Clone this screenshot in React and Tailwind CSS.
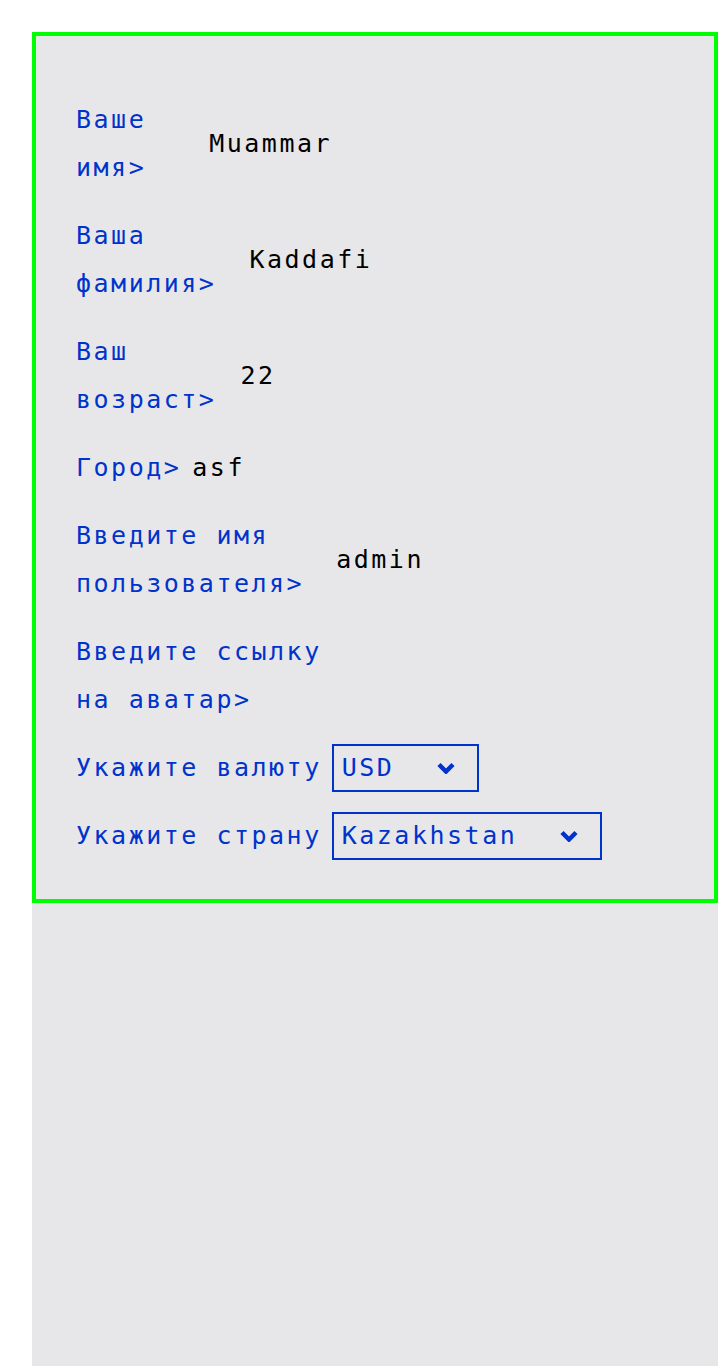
import React from "react";

const rows = [
    { label: ["Ваше", "имя>"], value: "Muammar", gap: "ml-[63px]" },
    { label: ["Ваша", "фамилия>"], value: "Kaddafi", gap: "ml-[33px]" },
    { label: ["Ваш", "возраст>"], value: "22", gap: "ml-[24px]" },
    { label: ["Город>"], value: "asf", gap: "ml-[11px]" },
    { label: ["Введите имя", "пользователя>"], value: "admin", gap: "ml-[32px]" },
    { label: ["Введите ссылку", "на аватар>"], value: "", gap: "" },
];

function Chevron() {
    return (
        <svg width="18" height="12" viewBox="0 0 18 12" className="shrink-0">
            <path d="M2 2.5 L9 9.5 L16 2.5" fill="none" stroke="#0033cc" strokeWidth="4.5" strokeLinecap="butt" strokeLinejoin="miter" />
        </svg>
    );
}

function Select({ value }) {
    return (
        <div className="ml-[10px] h-12 flex items-center border-2 border-[#0033cc] pl-2 pr-[22px] text-[#0033cc]">
            <span>{value}</span>
            <span className="ml-[43px] flex items-center">
                <Chevron />
            </span>
        </div>
    );
}

export default function App() {
    return (
        <div
            className="min-h-screen bg-white pl-8 pt-8 text-[25px] leading-[48px] tracking-[2.5px]"
            style={{ fontFamily: '"DejaVu Sans Mono", monospace' }}
        >
            <div className="bg-[#e7e7ea] min-h-[1334px]">
                <div className="border-4 border-[#00ff00] pl-10 pt-[60px] pb-[39px] flex flex-col gap-5">
                    {rows.map((r, i) => (
                        <div key={i} className="flex items-center">
                            <div className="text-[#0033cc]">
                                {r.label.map((l, j) => (
                                    <div key={j} className="whitespace-pre">{l}</div>
                                ))}
                            </div>
                            {r.value && <span className={`${r.gap} text-black`}>{r.value}</span>}
                        </div>
                    ))}
                    <div className="flex items-center">
                        <span className="text-[#0033cc] whitespace-pre">Укажите валюту</span>
                        <Select value="USD" />
                    </div>
                    <div className="flex items-center">
                        <span className="text-[#0033cc] whitespace-pre">Укажите страну</span>
                        <Select value="Kazakhstan" />
                    </div>
                </div>
            </div>
        </div>
    );
}
